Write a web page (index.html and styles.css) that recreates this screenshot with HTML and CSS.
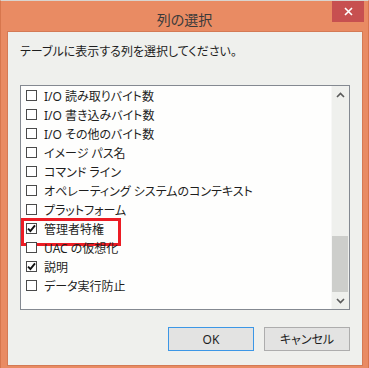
FILE: index.html
```html
<!DOCTYPE html>
<html lang="ja">
<head>
<meta charset="utf-8">
<title>列の選択</title>
<link rel="stylesheet" href="styles.css">
</head>
<body>
<div class="window">
  <header class="titlebar">
    <span class="spacer"></span>
    <h1 class="title">列の選択</h1>
    <button class="close" aria-label="閉じる">
      <svg width="9" height="9" viewBox="0 0 9 9"><path d="M1 1 L8 8 M8 1 L1 8" stroke="#fff" stroke-width="1.6" fill="none"/></svg>
    </button>
  </header>
  <main class="client">
    <p class="prompt">テーブルに表示する列を選択してください。</p>
    <div class="listbox">
      <ul class="items">
        <li class="item"><span class="box"></span><span class="label">I/O 読み取りバイト数</span></li>
        <li class="item"><span class="box"></span><span class="label">I/O 書き込みバイト数</span></li>
        <li class="item"><span class="box"></span><span class="label">I/O その他のバイト数</span></li>
        <li class="item"><span class="box"></span><span class="label">イメージ パス名</span></li>
        <li class="item"><span class="box"></span><span class="label">コマンド ライン</span></li>
        <li class="item"><span class="box"></span><span class="label">オペレーティング システムのコンテキスト</span></li>
        <li class="item"><span class="box"></span><span class="label">プラットフォーム</span></li>
        <li class="item marked"><span class="box"><svg width="9" height="9" viewBox="0 0 9 9"><path d="M1 4.6 L3.4 7 L8 1.4" stroke="#111" stroke-width="1.9" fill="none"/></svg></span><span class="label">管理者特権</span></li>
        <li class="item"><span class="box"></span><span class="label">UAC の仮想化</span></li>
        <li class="item"><span class="box"><svg width="9" height="9" viewBox="0 0 9 9"><path d="M1 4.6 L3.4 7 L8 1.4" stroke="#111" stroke-width="1.9" fill="none"/></svg></span><span class="label">説明</span></li>
        <li class="item"><span class="box"></span><span class="label">データ実行防止</span></li>
      </ul>
      <div class="scrollbar">
        <div class="arrow">
          <svg width="9" height="6" viewBox="0 0 9 6"><path d="M1 5 L4.5 1.5 L8 5" stroke="#5a5a5a" stroke-width="1.6" fill="none"/></svg>
        </div>
        <div class="track"><div class="thumb"></div></div>
        <div class="arrow">
          <svg width="9" height="6" viewBox="0 0 9 6"><path d="M1 1 L4.5 4.5 L8 1" stroke="#5a5a5a" stroke-width="1.6" fill="none"/></svg>
        </div>
      </div>
    </div>
    <div class="actions">
      <button class="btn default">OK</button>
      <button class="btn">キャンセル</button>
    </div>
  </main>
</div>
</body>
</html>
```
FILE: styles.css
```css
* { box-sizing: border-box; }
html, body { margin: 0; padding: 0; }
body {
  background: #e98b63;
  font-family: "Noto Sans", "Noto Sans CJK JP", sans-serif;
  font-feature-settings: "palt";
  color: #1e1e1e;
}
.window {
  width: 369px;
  height: 368px;
  background: #e98b63;
  border-top: 1px solid #d9d4cf;
  border-left: 1px solid #d7764d;
  border-right: 1px solid #d7764d;
  padding: 0 5px 2px 6px;
  display: flex;
  flex-direction: column;
}
.titlebar {
  height: 30px;
  display: grid;
  grid-template-columns: 1fr auto 1fr;
  margin: 0 -5px 0 -6px;
}
.title {
  margin: 0;
  font-size: 14px;
  font-weight: normal;
  color: #3a3a3a;
  line-height: 16px;
  align-self: start;
  padding-top: 11px;
}
.close {
  justify-self: end;
  align-self: start;
  width: 32px;
  height: 21px;
  margin-right: 4px;
  border: none;
  padding: 0;
  background: #c75050;
  display: flex;
  align-items: center;
  justify-content: center;
}
.client {
  flex: 1;
  background: #eff0ed;
  border: 1px solid #d47a55;
  padding: 12px 12px 0 12px;
  display: flex;
  flex-direction: column;
}
.prompt {
  margin: 0;
  font-size: 12px;
  line-height: 16px;
  color: #1e1e1e;
}
.listbox {
  margin-top: 25px;
  height: 225px;
  border: 1px solid #848991;
  background: #fefefd;
  display: flex;
  overflow: hidden;
}
.items {
  list-style: none;
  margin: 0;
  padding: 0;
  flex: 1;
}
.item {
  height: 19px;
  display: flex;
  align-items: center;
  padding-left: 5px;
  font-size: 12px;
  line-height: 19px;
  color: #1e1e1e;
  position: relative;
  white-space: nowrap;
}
.label {
  padding-top: 1px;
}
.box {
  width: 11px;
  height: 11px;
  border: 1px solid #4a4a4a;
  background: #fff;
  margin-right: 7px;
  display: flex;
  align-items: center;
  justify-content: center;
  flex: none;
}
.marked::after {
  content: "";
  position: absolute;
  left: 0;
  top: -1px;
  width: 94px;
  height: 22px;
  border: 3px solid #ec1c24;
}
.scrollbar {
  width: 18px;
  background: #eff0ed;
  border-left: 1px solid #f7f7f6;
  display: flex;
  flex-direction: column;
}
.arrow {
  height: 17px;
  display: flex;
  align-items: center;
  justify-content: center;
}
.track {
  flex: 1;
  display: flex;
  flex-direction: column;
}
.thumb {
  margin-top: auto;
  height: 56px;
  margin-right: 1px;
  background: #cdcecb;
}
.actions {
  margin-top: 17px;
  display: flex;
  justify-content: flex-end;
  gap: 10px;
}
.btn {
  width: 86px;
  height: 24px;
  font-family: "Noto Sans", "Noto Sans CJK JP", sans-serif;
  font-feature-settings: "palt";
  font-size: 12px;
  color: #1e1e1e;
  background: #e3e3e2;
  border: 1px solid #adadad;
  padding: 0;
}
.btn.default {
  border-color: #3c97e6;
}
```
